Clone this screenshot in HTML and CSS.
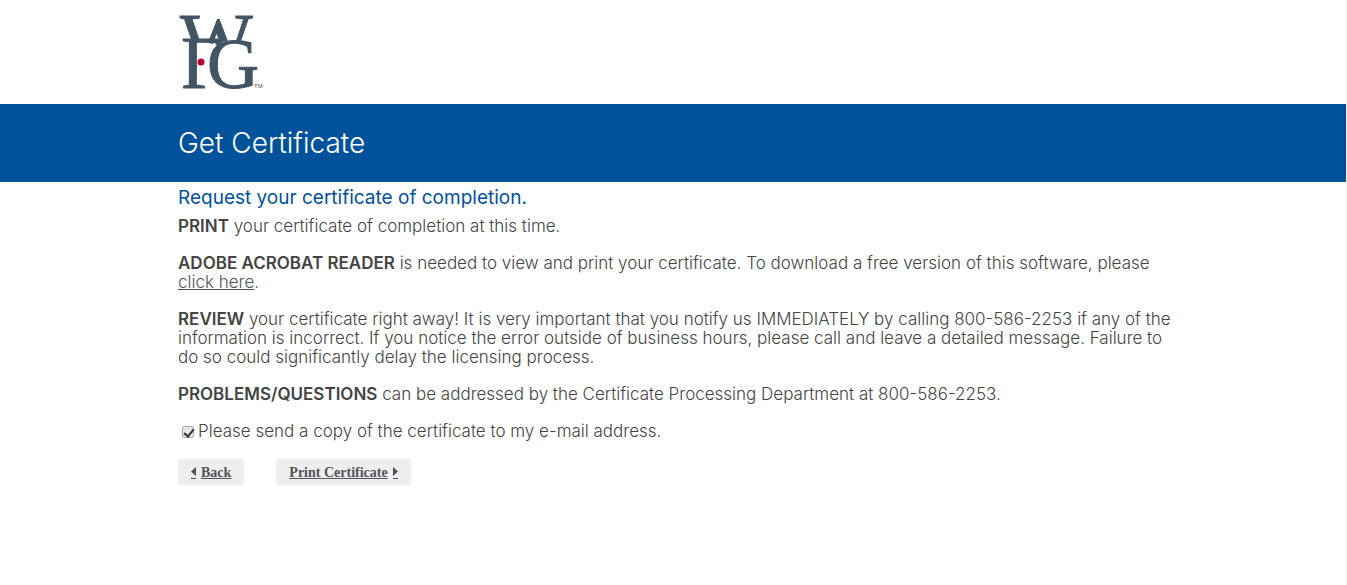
FILE: index.html
```
<!DOCTYPE html>
<html lang="en">
<head>
<meta charset="utf-8">
<meta name="viewport" content="width=device-width, initial-scale=1">
<title>Get Certificate</title>
<link rel="stylesheet" href="styles.css">
</head>
<body>
<header class="masthead">
  <div class="container">
    <svg class="logo" viewBox="0 0 90 80" role="img" aria-label="WFG">
      <defs><clipPath id="w-clip"><path d="M0 0H90V28H68L62 31H46L38 36H31V31H0Z"/></clipPath></defs>
      <g class="logo-letters">
        <text x="2" y="56" font-size="77" clip-path="url(#w-clip)">W</text>
        <text x="3" y="78" font-size="74">F</text>
        <path class="logo-gap" d="M19 33H31L48 38V72H19Z"/>
        <text x="29" y="78" font-size="72">G</text>
      </g>
      <circle class="logo-dot" cx="23" cy="52" r="3.5"/>
      <text class="logo-mark" x="76" y="78">TM</text>
    </svg>
  </div>
</header>
<div class="banner"><div class="container"><h1 class="title">Get Certificate</h1></div></div>
<main class="container content">
  <h2 class="subtitle">Request your certificate of completion.</h2>
  <p class="copy"><strong>PRINT</strong> your certificate of completion at this time.</p>
  <p class="copy"><strong>ADOBE ACROBAT READER</strong> is needed to view and print your certificate. To download a free version of this software, please <a class="link" href="#">click here</a>.</p>
  <p class="copy"><strong>REVIEW</strong> your certificate right away! It is very important that you notify us IMMEDIATELY by calling 800-586-2253 if any of the information is incorrect. If you notice the error outside of business hours, please call and leave a detailed message. Failure to do so could significantly delay the licensing process.</p>
  <p class="copy"><strong>PROBLEMS/QUESTIONS</strong> can be addressed by the Certificate Processing Department at 800-586-2253.</p>
  <div class="option"><input class="check" type="checkbox" id="send-copy" checked><label for="send-copy">Please send a copy of the certificate to my e-mail address.</label></div>
  <nav class="actions">
    <a class="action" href="#"><svg class="arrow" viewBox="0 0 5 12" aria-hidden="true"><path d="M5 0V9L0 4.5ZM0 11H5V12H0Z"/></svg><span>Back</span></a>
    <a class="action" href="#"><span>Print Certificate</span><svg class="arrow" viewBox="0 0 5 12" aria-hidden="true"><path d="M0 0V9L5 4.5ZM0 11H5V12H0Z"/></svg></a>
  </nav>
</main>
</body>
</html>
```
FILE: styles.css
```
* { box-sizing: border-box; }
body {
  margin: 0;
  min-height: 100vh;
  border-right: 1px solid #eee;
  background: #fff;
  color: #444;
  font: 300 17px/19px Inter, sans-serif;
}
.container { width: 100%; max-width: 1022px; margin: 0 auto; padding: 0 10px 0 16px; }
.masthead { padding: 10px 0 14px; }
.logo { display: block; width: 90px; height: 80px; }
.logo-letters { fill: #435563; stroke: #435563; stroke-width: 1; font-family: "Liberation Serif", serif; }
.logo-gap { fill: #fff; stroke: none; }
.logo-dot { fill: #b80032; }
.logo-mark { fill: #435563; font: 6px "Liberation Sans", sans-serif; }
.banner { background: #00529b; color: #fff; padding: 20px 0; }
.title { margin: 0; font-size: 28px; line-height: 38px; font-weight: 300; }
.content { padding-top: 4px; }
.subtitle { margin: 0 0 7px; color: #00529b; font-size: 19px; line-height: 24px; font-weight: 400; }
.copy { margin: 0 0 18px; }
.copy strong { font-weight: 600; }
.link { color: #50535a; }
.option { display: flex; align-items: center; }
.check {
  appearance: none;
  width: 12px;
  height: 12px;
  margin: 0 4px;
  border: 1px solid #aaa;
  border-radius: 2px;
  background: #e6e6e6;
  position: relative;
}
.check:checked::after {
  content: "";
  position: absolute;
  left: 3px;
  top: 0;
  width: 4px;
  height: 8px;
  border: solid #333;
  border-width: 0 2px 2px 0;
  transform: rotate(40deg);
}
.actions { display: flex; gap: 32px; margin-top: 18px; }
.action {
  display: flex;
  align-items: center;
  gap: 5px;
  padding: 5px 13px 3px;
  border-radius: 2px;
  background: #eee;
  color: #50535a;
  font: bold 14px/18px "Liberation Serif", serif;
}
.arrow { width: 5px; height: 12px; fill: currentColor; }
```
